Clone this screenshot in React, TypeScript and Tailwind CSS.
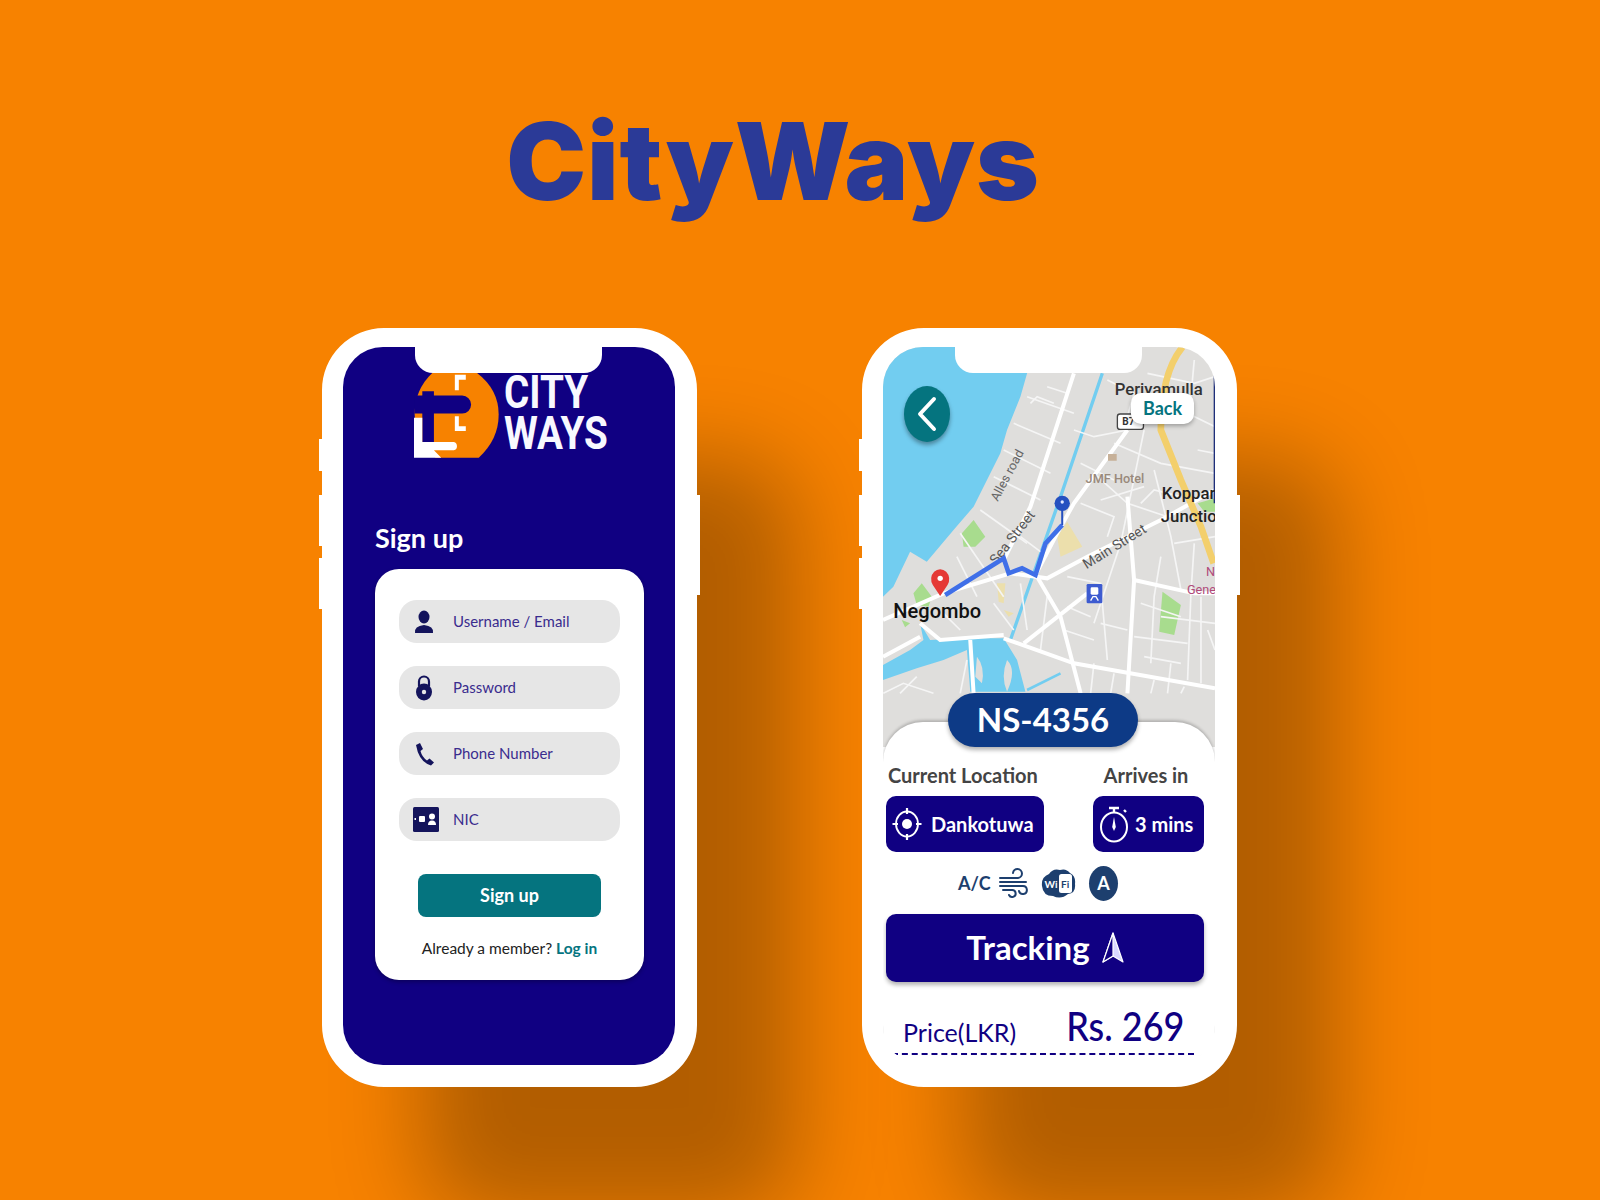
import React from 'react';

const mainRoads = [
    'M640 130 L510 530 L430 690',
    'M800 300 L640 520 L590 610 L525 735',
    'M69 870 L250 790 L450 730 L560 745 L680 680 L900 570 L1062 480',
    'M530 740 L600 860 L660 1090',
    'M430 925 L640 1000 L1062 1075',
    'M180 880 L240 930 L430 915',
    'M490 940 L680 790',
    'M800 500 L820 750 L800 1090',
    'M820 750 L1000 790 L1062 790',
    'M330 930 L340 1090',
    'M69 980 L180 920',
];

const minorRoads = [
    'M500 200 L640 250', 'M460 280 L600 340', 'M430 360 L570 430', 'M400 440 L540 510',
    'M510 220 L530 200 L580 220', 'M360 540 L500 640', 'M300 610 L430 800', 'M290 680 L350 800',
    'M640 300 L700 320 L800 300', 'M760 340 L900 400 L1062 430', 'M700 430 L800 520 L920 560',
    'M660 520 L760 560 L740 620', 'M850 300 L780 640 L700 880', 'M880 420 L930 620 L960 780',
    'M940 640 L1062 620', 'M900 680 L880 800 L870 1000', 'M1000 640 L990 790 L980 1050',
    'M560 800 L540 960', 'M620 740 L720 760 L740 990', 'M480 760 L500 900', 'M400 820 L460 900',
    'M860 130 L1000 160 L1062 140', 'M960 240 L1062 290', 'M1000 90 L990 200', 'M1010 360 L1062 370',
    'M900 860 L1062 880', 'M820 920 L980 940', 'M70 1090 L130 1060 L220 1090', 'M300 1090 L320 990',
    'M120 1090 L170 1040', 'M720 880 L800 900', 'M1020 800 L1020 1060', 'M930 1000 L920 1090',
    'M560 170 L620 190', 'M740 150 L820 190 L800 260', 'M660 400 L760 450', 'M720 510 L850 470',
    'M840 520 L880 480 L960 500', 'M620 830 L690 860', 'M610 900 L700 930', 'M840 820 L960 860',
    'M850 980 L960 1000', 'M1040 900 L1062 960', 'M480 620 L560 680', 'M250 850 L300 900',
    'M700 1000 L690 1090', 'M760 1030 L750 1090', 'M880 1050 L870 1090', 'M970 1070 L960 1090',
];

function SideNubs() {
    return (
        <>
            <div className="absolute left-[-24px] top-[92px] h-[32px] w-[5px] bg-white"/>
            <div className="absolute left-[-24px] top-[148px] h-[51px] w-[5px] bg-white"/>
            <div className="absolute left-[-24px] top-[211px] h-[51px] w-[5px] bg-white"/>
            <div className="absolute right-[-25px] top-[148px] h-[100px] w-[5px] bg-white"/>
        </>
    );
}

function Phone(props: { children: React.ReactNode }) {
    return (
        <div className="relative h-[759px] w-[375px] rounded-[62px] border-t-[19px] border-r-[22px] border-b-[22px] border-l-[21px] border-white bg-white shadow-[100px_130px_90px_rgba(0,0,0,0.28)]">
            <SideNubs/>
            <div className="relative h-full w-full overflow-hidden rounded-[40px]">
                {props.children}
                <div className="absolute left-[72px] top-0 h-[26px] w-[187px] rounded-b-[18px] bg-white"/>
            </div>
        </div>
    );
}

function LogoMark() {
    return (
        <svg width="85" height="85" viewBox="280 160 256 256" className="block shrink-0">
            <path d="M335 160 H470 Q535 210 535 285 Q535 360 475 415 H345 Q282 360 282 285 Q282 210 335 160 Z" fill="#f78200"/>
            <path d="M282 228 H305 V215 H340 V228 H425 A27 27 0 0 1 425 282 H340 V372 H305 V282 H282 Z" fill="#100082"/>
            <path d="M280 295 H305 V368 H400 A13 13 0 0 1 400 393 H340 L362 415 H280 Z" fill="#ffffff"/>
            <path d="M403 165 H436 V180 H415 V212 H403 Z M403 290 H415 V320 H436 V335 H403 Z" fill="#ffffff"/>
        </svg>
    );
}

function UserIcon() {
    return (
        <svg width="20" height="24" viewBox="0 0 20 24" className="ml-[1px]">
            <ellipse cx="10" cy="7" rx="5.5" ry="6.5" fill="#14145c"/>
            <path d="M1 23 Q0 16 10 15 Q20 16 19 23 Z" fill="#14145c"/>
        </svg>
    );
}

function LockIcon() {
    return (
        <svg width="18" height="26" viewBox="0 0 18 26" className="ml-[2px]">
            <path d="M4 11 V6.5 A5 5 0 0 1 14 6.5 V11" fill="none" stroke="#14145c" strokeWidth="2.2"/>
            <ellipse cx="9" cy="17" rx="8" ry="8.5" fill="#14145c"/>
            <circle cx="9" cy="17" r="2.2" fill="#e6e6e6"/>
        </svg>
    );
}

function PhoneIcon() {
    return (
        <svg width="20" height="24" viewBox="0 0 20 24" className="ml-[2px]">
            <path d="M1 3 L5 1 L8 7 L5.5 9 Q7 15 12 18.5 L14.5 16.5 L19 20.5 L16 23.5 Q4 20 1 3 Z" fill="#14145c"/>
        </svg>
    );
}

function NicIcon() {
    return (
        <svg width="26" height="25" viewBox="0 0 26 25">
            <rect width="26" height="25" rx="1.5" fill="#14145c"/>
            <rect x="6" y="9" width="6" height="6" rx="1" fill="#ffffff"/>
            <rect x="1.5" y="11" width="1.5" height="2" fill="#ffffff"/>
            <circle cx="19" cy="9.5" r="3" fill="#ffffff"/>
            <path d="M15 18 Q15 13.5 19 13.5 Q23 13.5 23 18 Z" fill="#ffffff"/>
        </svg>
    );
}

const fields = [
    {label: 'Username / Email', icon: <UserIcon/>},
    {label: 'Password', icon: <LockIcon/>},
    {label: 'Phone Number', icon: <PhoneIcon/>},
    {label: 'NIC', icon: <NicIcon/>},
];

function SignUpScreen() {
    return (
        <div className="flex h-full w-full flex-col bg-[#100082] pt-[26px] pr-[31px] pl-[32px]">
            <div className="flex h-[85px] items-start pl-[39px]">
                <LogoMark/>
                <div className="-mt-[1px] ml-[5px] origin-left scale-x-[0.84] font-['Roboto',sans-serif] text-[46px] font-bold leading-[41px] text-[#f8f8ff]">
                    <div>CITY</div>
                    <div>WAYS</div>
                </div>
            </div>
            <h1 className="mt-[64px] text-[27px] font-bold leading-[32px] text-white">Sign up</h1>
            <div className="mt-[15px] flex flex-col rounded-[24px] bg-white px-[24px] pt-[31px] pb-[20px] shadow-[0_2px_4px_rgba(0,0,0,0.3)]">
                <div className="flex flex-col gap-[23px]">
                    {fields.map((field, idx) => (
                        <div key={`field_${idx}`} className="flex h-[43px] items-center rounded-[18px] bg-[#e6e6e6]">
                            <div className="flex w-[54px] shrink-0 pl-[14px]">{field.icon}</div>
                            <span className="text-[15px] text-[#3a2c8e]">{field.label}</span>
                        </div>
                    ))}
                </div>
                <div className="mx-[19px] mt-[33px] flex h-[43px] items-center justify-center rounded-[8px] bg-[#05747f] text-[18px] font-bold text-white">
                    Sign up
                </div>
                <div className="mt-[19px] text-center text-[15.5px] leading-[24px] text-[#222222]">
                    Already a member? <span className="font-bold text-[#05747f]">Log in</span>
                </div>
            </div>
        </div>
    );
}

function MapDrawing() {
    return (
        <svg viewBox="69 51 993 1200" className="block h-[400px] w-[332px] font-['Roboto',sans-serif]" preserveAspectRatio="none">
            <rect x="69" y="51" width="993" height="1200" fill="#dfdedc"/>
            <path d="M69 51 H520 L500 130 L480 200 L440 300 L420 370 L380 450 L340 530 L280 600 L200 695 L150 665 L100 770 L69 800 Z" fill="#72cdf0"/>
            <path d="M180 880 L210 930 L320 925 L430 925 L470 990 L495 1085 L330 1085 L320 960 L250 990 L170 1015 L69 1050 V1005 L150 960 L190 930 Z" fill="#72cdf0"/>
            <path d="M350 980 Q375 1010 365 1060 L345 1040 Z M440 990 Q470 1020 440 1085 Q420 1040 440 990 Z" fill="#dfdedc"/>
            <path d="M725 130 L600 500 L450 930" fill="none" stroke="#72cdf0" strokeWidth="10"/>
            <path d="M500 1080 L600 1030" fill="none" stroke="#72cdf0" strokeWidth="8"/>
            <path d="M305 610 L340 570 L375 620 L345 650 L310 650 Z M160 790 L185 760 L215 800 L205 830 L170 825 Z M905 785 L960 825 L940 915 L895 905 Z M1010 520 L1062 505 V545 L1030 545 Z M125 870 L150 880 L135 892 Z" fill="#a8dc8e"/>
            <path d="M620 575 L665 650 L600 680 L590 620 Z M410 760 L435 760 L430 820 L415 815 Z M430 840 L460 850 L445 860 Z" fill="#ecdfac"/>
            {minorRoads.map((d, idx) => (
                <path key={`minor_${idx}`} d={d} fill="none" stroke="#f5f5f5" strokeWidth="5"/>
            ))}
            {mainRoads.map((d, idx) => (
                <path key={`main_${idx}`} d={d} fill="none" stroke="#ffffff" strokeWidth="12"/>
            ))}
            <path d="M965 51 Q900 130 900 300 L960 450 L1020 590 L1058 700" fill="none" stroke="#f3cf6c" strokeWidth="20"/>
            <path d="M1060 60 V520" fill="none" stroke="#1f2f7a" strokeWidth="4"/>

            <text x="762" y="195" fontSize="50" fill="#333333" className="font-medium">Periyamulla</text>
            <rect x="770" y="252" width="78" height="46" rx="8" fill="#ffffff" stroke="#444444" strokeWidth="4"/>
            <text x="785" y="285" fontSize="30" fill="#333333" className="font-bold">B7</text>
            <path d="M742 372 H768 V392 H742 Z" fill="#c7b199"/>
            <text x="675" y="458" fontSize="38" fill="#99897b" className="font-medium">JMF Hotel</text>
            <text x="903" y="507" fontSize="50" fill="#222222" className="font-medium">Koppar</text>
            <text x="900" y="575" fontSize="50" fill="#222222" className="font-medium">Junctio</text>
            <text x="1035" y="737" fontSize="38" fill="#b04a7a">N</text>
            <text x="978" y="792" fontSize="38" fill="#b04a7a">Gene</text>
            <text transform="translate(412 516) rotate(-62)" fontSize="38" fill="#666666">Alles road</text>
            <text transform="translate(408 706) rotate(-52)" fontSize="42" fill="#555555">Sea Street</text>
            <text transform="translate(678 718) rotate(-32)" fontSize="42" fill="#555555">Main Street</text>
            <text x="100" y="865" fontSize="60" fill="#111111" className="font-medium">Negombo</text>

            <path d="M255 795 L430 685 L445 730 L485 715 L525 735 L555 640 L605 585" fill="none" stroke="#3f6fe8" strokeWidth="14"/>
            <path d="M605 585 V540" fill="none" stroke="#2550c0" strokeWidth="6"/>
            <circle cx="605" cy="520" r="23" fill="#2550c0"/>
            <circle cx="605" cy="516" r="5" fill="#dfe6ff"/>
            <path d="M240 798 L218 765 A27 30 0 1 1 262 765 Z" fill="#e53935"/>
            <circle cx="240" cy="745" r="8" fill="#ffffff"/>
            <rect x="678" y="762" width="47" height="58" rx="4" fill="#3d5bd0"/>
            <rect x="690" y="772" width="23" height="22" rx="4" fill="#ffffff"/>
            <path d="M690 812 L697 800 H706 L713 812" fill="none" stroke="#ffffff" strokeWidth="4"/>
        </svg>
    );
}

function TargetIcon() {
    return (
        <svg width="30" height="34" viewBox="0 0 30 34" fill="none" stroke="#ffffff" strokeWidth="1.8">
            <ellipse cx="15" cy="17" rx="11" ry="12.5"/>
            <circle cx="15" cy="17" r="5" fill="#ffffff" stroke="none"/>
            <path d="M15 1 V7 M15 27 V33 M0.5 17 H6 M24 17 H29.5" strokeWidth="2.2"/>
        </svg>
    );
}

function StopwatchIcon() {
    return (
        <svg width="30" height="38" viewBox="0 0 30 38" fill="none" stroke="#ffffff" strokeWidth="2">
            <ellipse cx="15" cy="22" rx="13" ry="14.5"/>
            <path d="M10 3 H20 M15 3 V7 M25 5 L27 7" strokeWidth="2.4"/>
            <path d="M15 12 L16.8 22 L15 26 L13.2 22 Z" fill="#ffffff" stroke="none"/>
        </svg>
    );
}

function WindIcon() {
    return (
        <svg width="30" height="32" viewBox="0 0 30 32" fill="none" stroke="#1d3f6e" strokeWidth="2" strokeLinecap="round">
            <path d="M1 11 H19 A4.5 4.5 0 1 0 14 6"/>
            <path d="M1 15 H27"/>
            <path d="M1 19 H24 A4 4 0 1 1 20 24"/>
            <path d="M4 23 H13 A3.5 3.5 0 1 1 10 28"/>
        </svg>
    );
}

function WifiIcon() {
    return (
        <svg width="35" height="32" viewBox="0 0 35 32">
            <path d="M8 7 Q12 1 19 3 Q25 1 29 6 Q35 9 34 17 Q35 26 27 27 Q20 33 12 29 Q2 29 1 19 Q0 10 8 7 Z" fill="#1d3f6e"/>
            <rect x="18" y="7" width="13" height="19" rx="2.5" fill="#ffffff"/>
            <text x="3.5" y="21" fontSize="10" fontWeight="700" fill="#ffffff">Wi</text>
            <text x="20" y="21" fontSize="10" fontWeight="700" fill="#1d3f6e">Fi</text>
        </svg>
    );
}

function NavIcon() {
    return (
        <svg width="22" height="32" viewBox="0 0 22 32">
            <path d="M11 1 L21 30 L11 24 L1 30 Z" fill="#d8d8ff" stroke="#ffffff" strokeWidth="1.2" strokeLinejoin="round"/>
            <path d="M11 1 L11 24 L1 30 Z" fill="#100082" stroke="#ffffff" strokeWidth="1.2" strokeLinejoin="round"/>
        </svg>
    );
}

function TrackingScreen() {
    return (
        <div className="relative h-full w-full bg-white">
            <MapDrawing/>
            <div className="absolute left-[21px] top-[39px] flex h-[56px] w-[46px] items-center justify-center rounded-[50%] bg-[#05747f] shadow-[0_3px_4px_rgba(0,0,0,0.35)]">
                <svg width="20" height="36" viewBox="0 0 20 36" fill="none" stroke="#ffffff" strokeWidth="4" strokeLinecap="round" strokeLinejoin="round">
                    <path d="M17 3 L3 18 L17 33"/>
                </svg>
            </div>
            <div className="absolute left-[248px] top-[46px] flex h-[31px] w-[63px] items-center justify-center rounded-[10px] bg-white text-[18px] font-bold text-[#05747f] shadow-[0_2px_4px_rgba(0,0,0,0.3)]">
                Back
            </div>

            <div className="relative -mt-[25px] rounded-t-[40px] bg-white pt-[41px] pl-[3px] shadow-[0_-2px_3px_rgba(0,0,0,0.2)]">
                <div className="absolute left-[65px] top-[-29px] flex h-[54px] w-[190px] items-center justify-center rounded-[27px] bg-[#0d3a86] text-[33px] font-bold text-white shadow-[0_3px_4px_rgba(0,0,0,0.3)]">
                    NS-4356
                </div>
                <div className="flex gap-[49px]">
                    <div className="flex w-[158px] flex-col gap-[9px]">
                        <div className="pl-[2px] text-[20px] font-bold leading-[24px] text-[#444444]">Current Location</div>
                        <div className="flex h-[56px] items-center gap-[9px] rounded-[10px] bg-[#100082] pl-[6px] text-[20px] font-bold text-white">
                            <TargetIcon/>
                            Dankotuwa
                        </div>
                    </div>
                    <div className="flex w-[111px] flex-col gap-[9px]">
                        <div className="pr-[5px] text-center text-[20px] font-bold leading-[24px] text-[#444444]">Arrives in</div>
                        <div className="flex h-[56px] items-center gap-[6px] rounded-[10px] bg-[#100082] pl-[6px] text-[20px] font-bold text-white">
                            <StopwatchIcon/>
                            3 mins
                        </div>
                    </div>
                </div>
                <div className="mt-[13px] flex h-[36px] items-center pl-[72px]">
                    <span className="w-[34px] text-[18px] font-bold text-[#1d3f6e]">A/C</span>
                    <div className="ml-[7px]"><WindIcon/></div>
                    <div className="ml-[12px]"><WifiIcon/></div>
                    <div className="ml-[13px] flex h-[35px] w-[29px] items-center justify-center rounded-[50%] bg-[#1d3f6e] text-[18px] font-bold text-white">A</div>
                </div>
                <div className="mt-[13px] flex h-[68px] w-[318px] items-center justify-center gap-[12px] rounded-[10px] bg-[#100082] text-[33px] font-bold text-white shadow-[0_3px_4px_rgba(0,0,0,0.3)]">
                    Tracking
                    <NavIcon/>
                </div>
                <div className="mt-[21px] ml-[6px] flex h-[52px] w-[302px] items-end justify-between border-b-2 border-dashed border-[#100082] pr-[10px] pl-[11px] text-[#100082]">
                    <span className="pb-[2px] text-[25px]">Price(LKR)</span>
                    <span className="origin-right scale-x-[0.9] pb-[3px] text-[40px] font-medium leading-[48px]">Rs. 269</span>
                </div>
            </div>
        </div>
    );
}

export default function App() {
    return (
        <div className="h-[1200px] w-[1600px] overflow-hidden bg-[#f78200] font-['Lato',sans-serif]">
            <div className="pt-[108px] pr-[54px] text-center font-['Inter',sans-serif] text-[107px] font-black leading-none tracking-[0.008em] text-[#2b3a97]">
                CityWays
            </div>
            <div className="mt-[113px] flex gap-[165px] pl-[322px]">
                <Phone><SignUpScreen/></Phone>
                <Phone><TrackingScreen/></Phone>
            </div>
        </div>
    );
}
